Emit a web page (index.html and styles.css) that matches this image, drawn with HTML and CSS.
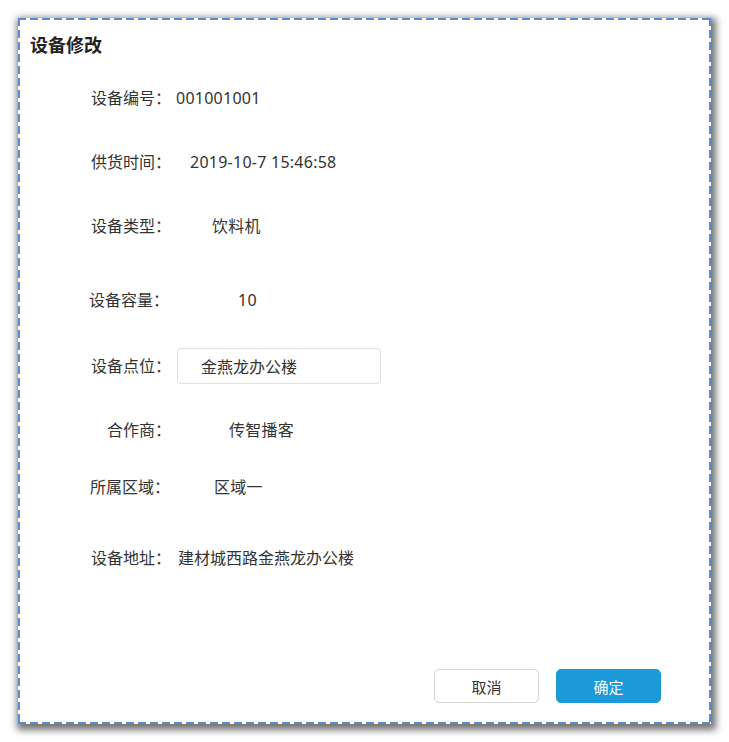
FILE: index.html
```html
<!DOCTYPE html>
<html lang="zh-CN">
<head>
<meta charset="utf-8">
<title>设备修改</title>
<link rel="stylesheet" href="styles.css">
</head>
<body>
<div class="dialog">
  <h2 class="title">设备修改</h2>
  <div class="form">
    <div class="row r1"><span class="label">设备编号：</span><span class="value v1">001001001</span></div>
    <div class="row r2"><span class="label">供货时间：</span><span class="value v2">2019-10-7 15:46:58</span></div>
    <div class="row r3"><span class="label">设备类型：</span><span class="value v3">饮料机</span></div>
    <div class="row r4"><span class="label lab-cap">设备容量：</span><span class="value v4">10</span></div>
    <div class="row r5 row-input"><span class="label">设备点位：</span><input class="field v5" type="text" value="金燕龙办公楼"></div>
    <div class="row r6"><span class="label">合作商：</span><span class="value v6">传智播客</span></div>
    <div class="row r7"><span class="label lab-area">所属区域：</span><span class="value v7">区域一</span></div>
    <div class="row r8"><span class="label">设备地址：</span><span class="value v8">建材城西路金燕龙办公楼</span></div>
  </div>
  <div class="footer">
    <button class="btn btn-cancel">取消</button>
    <button class="btn btn-ok">确定</button>
  </div>
</div>
</body>
</html>
```

FILE: styles.css
```css
html, body {
  margin: 0;
  padding: 0;
  background: #ffffff;
}

body {
  font-family: "Noto Sans", "Noto Sans CJK SC", sans-serif;
  color: #333333;
  min-height: 742px;
}

.dialog {
  box-sizing: border-box;
  margin: 18px 0 0 18px;
  width: 693px;
  height: 706px;
  padding-top: 14px;
  display: flex;
  flex-direction: column;
  box-shadow: 2px 3px 7px 3px rgba(0, 0, 0, 0.55);
  background:
    repeating-linear-gradient(90deg, #5a8bd2 0 8px, transparent 8px 12px) left top / 100% 2px no-repeat,
    repeating-linear-gradient(90deg, #5a8bd2 0 8px, transparent 8px 12px) left bottom / 100% 2px no-repeat,
    repeating-linear-gradient(180deg, #5a8bd2 0 8px, transparent 8px 12px) left top / 2px 100% no-repeat,
    repeating-linear-gradient(180deg, #5a8bd2 0 8px, transparent 8px 12px) right top / 2px 100% no-repeat,
    #ffffff;
}

.title {
  margin: 0;
  padding-left: 12px;
  font-family: "Noto Sans CJK SC", sans-serif;
  font-size: 18px;
  font-weight: 700;
  line-height: 24px;
  color: #222222;
}

.form {
  display: flex;
  flex-direction: column;
}

.row {
  display: flex;
  align-items: center;
  height: 20px;
  font-size: 16px;
  line-height: 20px;
}

.row-input {
  height: 36px;
}

.label {
  width: 80px;
  margin-left: 73px;
  text-align: right;
  white-space: nowrap;
  color: #333333;
}

.lab-cap {
  margin-left: 71px;
}

.lab-area {
  margin-left: 72px;
}

.value {
  white-space: nowrap;
  color: #333333;
  letter-spacing: 0.25px;
}

.r1 { margin-top: 32px; }
.r2 { margin-top: 44px; }
.r3 { margin-top: 44px; }
.r4 { margin-top: 54px; }
.r5 { margin-top: 38px; }
.r6 { margin-top: 36px; }
.r7 { margin-top: 37px; }
.r8 { margin-top: 51px; }

.v1 { margin-left: 5px; }
.v2 { margin-left: 19px; }
.v3 { margin-left: 41px; }
.v4 { margin-left: 69px; }
.v6 { margin-left: 58px; }
.v7 { margin-left: 44px; }
.v8 { margin-left: 7px; letter-spacing: 0; }

.field {
  box-sizing: border-box;
  margin: 0 0 0 6px;
  width: 204px;
  height: 36px;
  padding: 0 0 0 23px;
  border: 1px solid #dcdfe6;
  border-radius: 4px;
  background: #ffffff;
  font-family: "Noto Sans", "Noto Sans CJK SC", sans-serif;
  font-size: 16px;
  color: #333333;
  outline: none;
}

.footer {
  display: flex;
  justify-content: flex-end;
  gap: 17px;
  margin-top: 101px;
  padding-right: 50px;
}

.btn {
  box-sizing: border-box;
  width: 105px;
  height: 34px;
  border-radius: 5px;
  font-family: "Noto Sans CJK SC", sans-serif;
  font-size: 15px;
  cursor: pointer;
}

.btn-cancel {
  background: #ffffff;
  border: 1px solid #d4d4d4;
  color: #333333;
}

.btn-ok {
  background: #1a9bd7;
  border: 1px solid #1a9bd7;
  color: #ffffff;
}
```
